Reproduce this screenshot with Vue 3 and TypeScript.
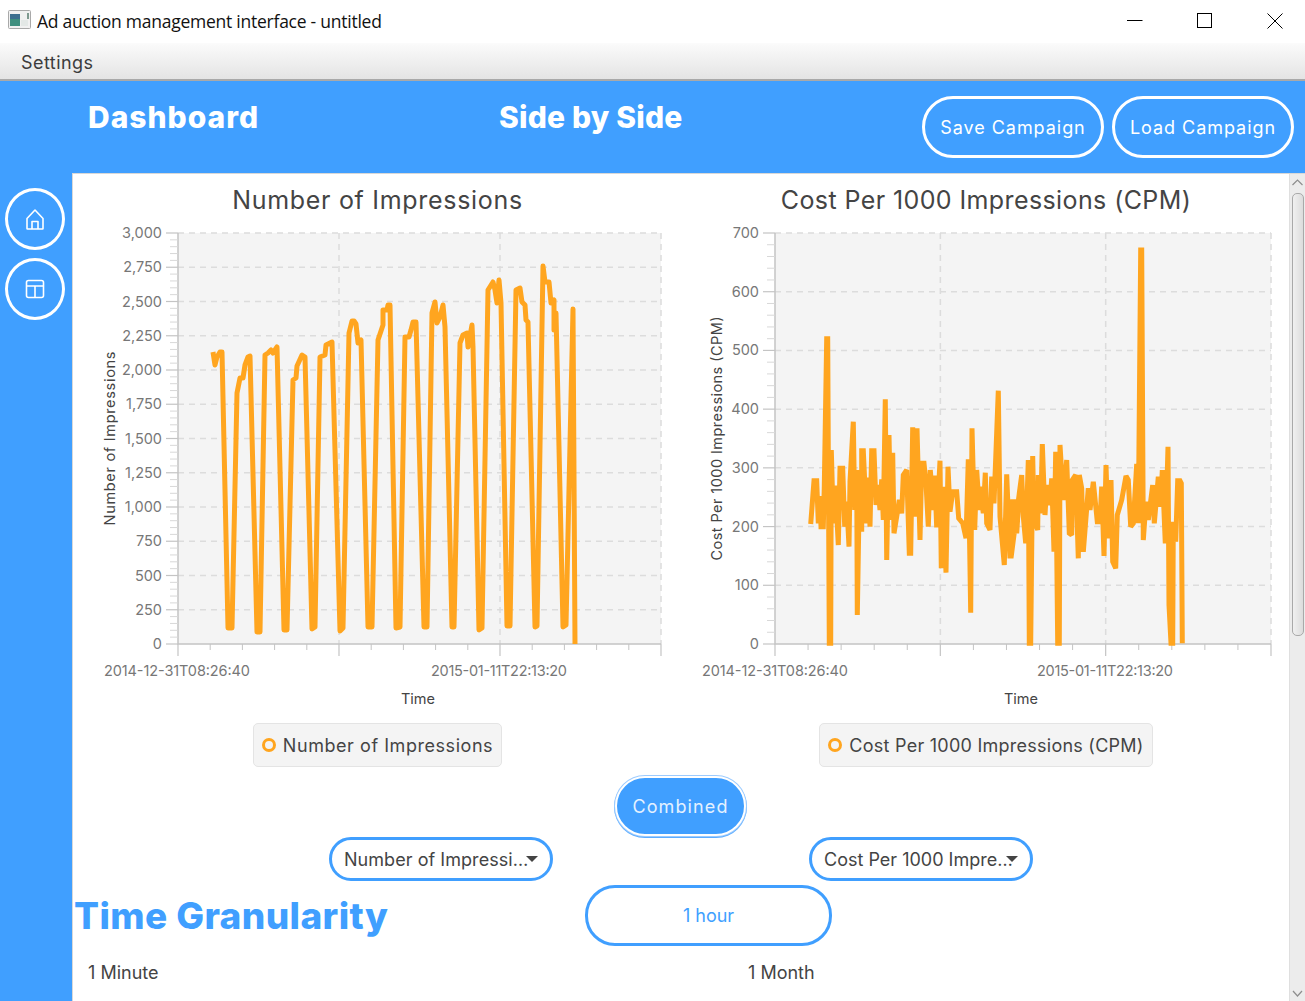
<script setup lang="ts">
type P = [number, number];

const impressionPoints: P[] = [
  [213,352],[215,365],[217,357],[220,352],[222,352],[228,628],[232,628],[237,393],[240,378],[243,378],[245,365],[248,357],[250,356],
  [257,632],[260,632],[265,355],[268,353],[271,350],[273,353],[277,347],[284,630],[287,630],[293,380],[296,378],[297,366],[302,355],[305,357],
  [312,629],[315,627],[320,357],[325,355],[326,345],[332,342],[340,631],[343,628],[349,333],[352,321],[354,321],[356,324],[358,343],[361,340],
  [368,627],[372,627],[378,340],[383,325],[383,310],[387,310],[388,305],[390,305],[396,628],[400,627],[405,337],[409,337],[411,330],[413,322],[416,322],
  [424,627],[427,627],[432,313],[435,302],[437,323],[440,317],[443,305],[445,327],[452,627],[454,627],[460,343],[463,335],[467,333],[468,347],[472,325],[473,347],
  [479,630],[482,628],[488,290],[493,282],[495,290],[497,303],[499,280],[501,303],[507,626],[510,626],[516,290],[520,288],[522,302],[525,305],[526,320],[528,322],
  [535,627],[537,626],[543,266],[545,282],[549,282],[551,303],[554,300],[554,330],[556,313],[563,627],[566,625],[573,309],[575,644]
];

const z5: P[] = [
  [122,612],[132,482],[140,482],[145,610],[150,528],[153,620],[160,620],[163,498],[170,56],[173,56],[178,970],[182,970],[184,390],[190,610],[196,497],[205,675],[210,445],[218,445],[224,620],[230,545],[237,680],[240,485],[250,305],[254,570],[260,450],[262,885],[268,520],[275,635],[275,392],[280,392],[290,610],[290,480],[295,480],[300,620],[305,392],[312,392],[318,555],[323,495],[330,570],[335,478],[340,600],[346,238],[350,720],[357,345],[362,600],[368,398],[372,640],[380,590],[388,540],[395,580],[400,465],[410,450],[418,700],[422,700],[428,322],[435,590],[441,325],[450,660],[455,430],[462,430],[468,490],[475,620],[481,450],[490,570],[494,467],[500,622],[510,422],[514,745],[520,500],[528,758],[534,440],[540,575],[548,515],[560,515],[566,595],[578,610],[588,655],[595,418],[602,878],[606,325],[614,630],[620,450],[628,570],[630,500],[640,580],[646,458],[650,610],[660,630],[665,470],[672,550],[685,212],[690,590],[703,735],[710,463],[720,715],[726,545],[740,640],[748,520]
];
const z6: P[] = [
  [3,955],[8,785],[18,785],[20,880],[28,760],[35,705],[40,830],[47,910],[55,660],[58,1210],[62,1210],[68,648],[72,840],[83,870],[85,705],[92,820],[97,612],[105,825],[110,735],[120,795],[125,715],[132,935],[137,635],[143,1210],[148,1210],[150,615],[160,780],[170,660],[178,880],[185,885],[187,720],[197,705],[205,955],[208,705],[215,745],[220,935],[235,745],[240,810],[250,725],[262,845],[270,845],[275,740],[282,948],[288,675],[295,895],[303,720],[308,965],[317,985],[322,825],[335,780],[348,708],[355,720],[362,860],[370,850],[380,672],[385,850],[392,30],[395,30],[400,900],[408,785],[415,840],[428,735],[433,850],[445,710],[452,800],[457,690],[466,910],[474,620],[477,1095],[483,1210],[488,1210],[490,845],[497,905],[503,722],[510,722],[514,730],[517,1210]
];

const toLine = (pts: P[]) => pts.map(([x, y]) => `${x},${y}`).join(" ");
const impressionLine = toLine(impressionPoints);
const cpmLine = toLine([
  ...z5.map(([x, y]): P => [+(770 + x / 3).toFixed(1), +(320 + y / 3).toFixed(1)]),
  ...z6.map(([x, y]): P => [+(1010 + x / 3).toFixed(1), +(240 + y / 3).toFixed(1)]),
]);

const range = (n: number) => Array.from({ length: n }, (_, i) => i);

interface Chart {
  id: string;
  viewBox: string;
  width: number;
  left: number;
  right: number;
  yLabels: string[];
  yTitle: string;
  yTitleX: number;
  yTitleLength: number;
  line: string;
  stroke: number;
  dates: { x: number; text: string; length: number }[];
  timeX: number;
}

const TOP = 233;
const BOTTOM = 644;

const charts: Chart[] = [
  {
    id: "chart-a",
    viewBox: "73 222 609 490",
    width: 609,
    left: 178,
    right: 661,
    yLabels: ["0","250","500","750","1,000","1,250","1,500","1,750","2,000","2,250","2,500","2,750","3,000"],
    yTitle: "Number of Impressions",
    yTitleX: 115,
    yTitleLength: 174,
    line: impressionLine,
    stroke: 5,
    dates: [
      { x: 177, text: "2014-12-31T08:26:40", length: 146 },
      { x: 499, text: "2015-01-11T22:13:20", length: 136 },
    ],
    timeX: 418,
  },
  {
    id: "chart-b",
    viewBox: "682 222 608 490",
    width: 608,
    left: 775,
    right: 1271,
    yLabels: ["0","100","200","300","400","500","600","700"],
    yTitle: "Cost Per 1000 Impressions (CPM)",
    yTitleX: 722,
    yTitleLength: 244,
    line: cpmLine,
    stroke: 5,
    dates: [
      { x: 775, text: "2014-12-31T08:26:40", length: 146 },
      { x: 1105, text: "2015-01-11T22:13:20", length: 136 },
    ],
    timeX: 1021,
  },
];

const yMajor = (c: Chart) => range(c.yLabels.length).map(i => BOTTOM - (i * (BOTTOM - TOP)) / (c.yLabels.length - 1));
const yMinor = (c: Chart) => {
  const step = (BOTTOM - TOP) / (c.yLabels.length - 1) / 5;
  return range((c.yLabels.length - 1) * 5 + 1).filter(i => i % 5 !== 0).map(i => BOTTOM - i * step);
};
const xMajor = (c: Chart) => range(4).map(i => c.left + (i * (c.right - c.left)) / 3);
const xMinor = (c: Chart) => {
  const step = (c.right - c.left) / 15;
  return range(16).filter(i => i % 5 !== 0).map(i => c.left + i * step);
};
</script>

<template>
  <div class="window">
    <div class="titlebar">
      <svg class="app-icon" width="23" height="19" viewBox="0 0 23 19">
        <rect x="0.5" y="0.5" width="22" height="18" rx="1" fill="#f1f1f1" stroke="#a9a9a9" />
        <rect x="2" y="4" width="10" height="12" fill="#3f8f7f" />
        <rect x="2" y="4" width="10" height="5" fill="#3d6f8f" />
        <rect x="13" y="10" width="7" height="6" fill="#e3e8e6" />
        <rect x="19" y="3" width="2" height="6" fill="#7f9a90" />
      </svg>
      <span class="window-title">Ad auction management interface - untitled</span>
      <div class="win-controls">
        <svg width="16" height="16" viewBox="0 0 16 16"><path d="M0 7.5H15.5" stroke="#000" fill="none" /></svg>
        <svg width="16" height="16" viewBox="0 0 16 16"><rect x="0.5" y="0.5" width="14" height="14" stroke="#000" fill="none" /></svg>
        <svg width="16" height="16" viewBox="0 0 16 16"><path d="M0.5 0.5L15.5 15.5M15.5 0.5L0.5 15.5" stroke="#000" fill="none" /></svg>
      </div>
    </div>

    <div class="menubar"><span>Settings</span></div>

    <header class="topbar">
      <h1 class="head-dash">Dashboard</h1>
      <h1 class="head-side">Side by Side</h1>
      <div class="top-actions">
        <button class="pill">Save Campaign</button>
        <button class="pill">Load Campaign</button>
      </div>
    </header>

    <div class="body">
      <nav class="sidebar">
        <button class="round">
          <svg width="22" height="24" viewBox="0 0 22 24" fill="none" stroke="#fff" stroke-width="1.6" stroke-linejoin="round">
            <path d="M11 3L3 11.5V21.5Q3 22 3.5 22H18.5Q19 22 19 21.5V11.5Z" />
            <path d="M8 22V14.5H14V22" />
          </svg>
        </button>
        <button class="round">
          <svg width="22" height="22" viewBox="0 0 22 22" fill="none" stroke="#fff" stroke-width="1.6" stroke-linejoin="round">
            <rect x="2.5" y="2.5" width="17" height="17" rx="2" />
            <path d="M2.5 8H19.5M11 8V19.5" />
          </svg>
        </button>
      </nav>

      <main class="content">
        <div class="scroll-area">
          <div class="charts">
            <section v-for="c in charts" :key="c.id" class="chart" :class="c.id">
              <h2 class="chart-title">{{ c.yTitle }}</h2>
              <svg class="plot" :viewBox="c.viewBox" :width="c.width" height="490">
                <rect :x="c.left" :y="TOP" :width="c.right - c.left" :height="BOTTOM - TOP" fill="#f4f4f4" />
                <g stroke="#dcdcdc" stroke-width="1.5" stroke-dasharray="6 5" fill="none">
                  <path v-for="y in yMajor(c).slice(1)" :key="y" :d="`M${c.left} ${y}H${c.right}`" />
                  <path v-for="x in xMajor(c).slice(1)" :key="x" :d="`M${x} ${TOP}V${BOTTOM}`" />
                </g>
                <g stroke="#c4c4c4" fill="none">
                  <path :d="`M${c.left} ${TOP}V${BOTTOM}H${c.right}`" stroke-width="1.5" />
                  <path v-for="y in yMajor(c)" :key="y" :d="`M${c.left - 12} ${y}H${c.left}`" stroke-width="1.2" />
                  <path v-for="y in yMinor(c)" :key="y" :d="`M${c.left - 8} ${y}H${c.left}`" stroke-width="1" stroke="#d8d8d8" />
                  <path v-for="x in xMajor(c)" :key="x" :d="`M${x} ${BOTTOM}v12`" stroke-width="1.2" />
                  <path v-for="x in xMinor(c)" :key="x" :d="`M${x} ${BOTTOM}v6`" stroke-width="1" />
                </g>
                <polyline
                  :points="c.line"
                  fill="none"
                  stroke="#ffa51f"
                  :stroke-width="c.stroke"
                  :stroke-linejoin="c.id === 'chart-a' ? 'round' : 'miter'"
                  stroke-miterlimit="2"
                />
                <text
                  v-for="(label, i) in c.yLabels"
                  :key="label"
                  class="tick"
                  :x="c.left - 16"
                  :y="yMajor(c)[i] + 5"
                  text-anchor="end"
                >{{ label }}</text>
                <text
                  v-for="d in c.dates"
                  :key="d.text"
                  class="tick"
                  :x="d.x"
                  y="676"
                  text-anchor="middle"
                  :textLength="d.length"
                >{{ d.text }}</text>
                <text class="axis-title" :x="c.timeX" y="704" text-anchor="middle">Time</text>
                <text
                  class="axis-title"
                  :transform="`translate(${c.yTitleX} 438.5) rotate(-90)`"
                  text-anchor="middle"
                  :textLength="c.yTitleLength"
                >{{ c.yTitle }}</text>
              </svg>
              <div class="legend"><span class="legend-dot"></span>{{ c.yTitle }}</div>
            </section>
          </div>

          <div class="combined-row"><button class="combined">Combined</button></div>

          <div class="selects">
            <div class="select select-a"><span>Number of Impressi…</span><i class="caret"></i></div>
            <div class="select select-b"><span>Cost Per 1000 Impre…</span><i class="caret"></i></div>
          </div>

          <div class="granularity">
            <h2 class="gran-title">Time Granularity</h2>
            <button class="hour">1 hour</button>
          </div>

          <div class="scale">
            <span class="scale-min">1 Minute</span>
            <span class="scale-max">1 Month</span>
          </div>
        </div>

        <div class="scrollbar">
          <svg class="arrow" width="15" height="19" viewBox="0 0 15 19"><path d="M2.5 11L7.5 6L12.5 11" stroke="#8e8e8e" stroke-width="1.2" fill="none" /></svg>
          <div class="thumb"></div>
          <svg class="arrow arrow-down" width="15" height="14" viewBox="0 0 15 14"><path d="M3 4L7.5 9L12 4" stroke="#8e8e8e" stroke-width="1.2" fill="none" /></svg>
        </div>
      </main>
    </div>
  </div>
</template>

<style scoped>
.window {
  width: 1305px;
  height: 1001px;
  overflow: hidden;
  display: flex;
  flex-direction: column;
  background: #fff;
  font-family: Inter, "Noto Sans", sans-serif;
  color: #333;
}
.titlebar {
  height: 43px;
  flex: none;
  display: flex;
  align-items: center;
  padding-left: 8px;
  background: #fff;
}
.app-icon { margin-right: 6px; margin-top: -4px; }
.window-title {
  font-family: "Open Sans", "Noto Sans", sans-serif;
  font-size: 17.5px;
  letter-spacing: -0.25px;
  color: #111;
  margin-top: -2px;
}
.win-controls {
  margin-left: auto;
  margin-right: 22px;
  display: flex;
  gap: 54px;
  margin-top: -2px;
}
.menubar {
  height: 38px;
  flex: none;
  box-sizing: border-box;
  display: flex;
  align-items: center;
  padding: 2px 0 0 21px;
  font-size: 18px;
  letter-spacing: 0.45px;
  color: #3c3c3c;
  background: linear-gradient(#fbfbfb, #e4e4e4);
  border-bottom: 2px solid #a9a9a9;
}
.topbar {
  height: 92px;
  flex: none;
  display: flex;
  padding-left: 88px;
  background: #409fff;
  color: #fff;
}
.topbar h1 {
  margin: 0;
  font-size: 30px;
  line-height: 36px;
  font-weight: 800;
  padding-top: 18px;
}
.head-dash { width: 411px; flex: none; letter-spacing: 1px; }
.head-side { letter-spacing: 0.2px; }
.top-actions {
  margin-left: auto;
  margin-right: 11px;
  padding-top: 15px;
  display: flex;
  gap: 8px;
}
.pill {
  width: 182px;
  height: 62px;
  box-sizing: border-box;
  border: 3px solid #fff;
  border-radius: 31px;
  background: transparent;
  color: #fff;
  font: 400 18px Inter, sans-serif;
  letter-spacing: 0.95px;
  padding: 0;
}
.body { flex: 1; min-height: 0; display: flex; background: #409fff; }
.sidebar {
  width: 72px;
  flex: none;
  display: flex;
  flex-direction: column;
  gap: 8px;
  padding: 15px 0 0 5px;
  box-sizing: border-box;
}
.round {
  width: 60px;
  height: 62px;
  box-sizing: border-box;
  border: 3px solid #fff;
  border-radius: 50%;
  background: transparent;
  padding: 0;
  display: flex;
  align-items: center;
  justify-content: center;
}
.content {
  flex: 1;
  min-width: 0;
  display: flex;
  background: #fff;
  border-top: 1px solid #d8d8d8;
  border-left: 1px solid #d8d8d8;
}
.scroll-area { flex: 1; min-width: 0; overflow: hidden; }
.charts { display: flex; }
.chart { display: flex; flex-direction: column; align-items: center; }
.plot { display: block; }
.chart-title {
  margin: 0;
  padding-top: 10px;
  height: 48px;
  box-sizing: border-box;
  font-size: 25px;
  line-height: 32px;
  font-weight: 400;
  color: #444;
  white-space: nowrap;
}
.chart-a .chart-title { letter-spacing: 0.7px; }
.chart-b .chart-title { letter-spacing: 0.4px; }
.tick { font-size: 14.5px; fill: #777; font-family: Inter, sans-serif; }
.axis-title { font-size: 14.5px; fill: #444; font-family: Inter, sans-serif; }
.legend {
  margin-top: 11px;
  height: 44px;
  box-sizing: border-box;
  display: flex;
  align-items: center;
  padding: 0 8px 0 8px;
  background: #f4f4f4;
  border: 1.5px solid #e4e4e4;
  border-radius: 5px;
  font-size: 18px;
  color: #444;
  white-space: nowrap;
}
.chart-a .legend { letter-spacing: 0.55px; }
.chart-b .legend { letter-spacing: 0.25px; }
.legend-dot {
  width: 14px;
  height: 14px;
  box-sizing: border-box;
  border: 3.5px solid #ffa51f;
  border-radius: 50%;
  margin-right: 7px;
}
.combined-row { padding-top: 9px; margin-left: 542px; height: 61px; }
.combined {
  width: 131px;
  height: 60px;
  box-sizing: border-box;
  padding: 0;
  border: 2px solid #fff;
  border-radius: 30px;
  background: #409fff;
  box-shadow: 0 0 0 1px #9ccbff, 0 1px 0 1px #5dadff;
  color: #e4f1ff;
  font: 400 18px Inter, sans-serif;
  letter-spacing: 1.1px;
}
.selects { display: flex; padding-left: 256px; }
.select {
  height: 44px;
  box-sizing: border-box;
  border: 3px solid #409fff;
  border-radius: 22px;
  display: flex;
  align-items: center;
  padding-left: 12px;
  position: relative;
  font-size: 18px;
  color: #444;
  white-space: nowrap;
}
.select-a { width: 224px; letter-spacing: 0.05px; }
.select-b { width: 224px; margin-left: 256px; }
.caret {
  position: absolute;
  right: 12px;
  top: 16px;
  width: 0;
  height: 0;
  border-left: 6px solid transparent;
  border-right: 6px solid transparent;
  border-top: 6px solid #444;
}
.granularity { display: flex; align-items: center; padding-top: 4px; }
.gran-title {
  margin: 0;
  width: 512px;
  flex: none;
  padding-left: 1px;
  box-sizing: border-box;
  font-size: 37px;
  line-height: 44px;
  font-weight: 800;
  letter-spacing: 0.4px;
  color: #409fff;
  white-space: nowrap;
}
.hour {
  width: 247px;
  height: 61px;
  box-sizing: border-box;
  border: 3px solid #409fff;
  border-radius: 30px;
  background: #fff;
  color: #409fff;
  padding: 0;
  font: 400 18px Inter, sans-serif;
}
.scale {
  display: flex;
  padding-top: 15px;
  font-size: 18px;
  line-height: 24px;
  color: #444;
}
.scale-min { margin-left: 15px; width: 660px; flex: none; }
.scrollbar {
  width: 15px;
  flex: none;
  display: flex;
  flex-direction: column;
  background: #ececec;
  border-left: 1px solid #dfdfdf;
}
.arrow { flex: none; display: block; }
.arrow-down { margin-top: auto; }
.thumb {
  flex: none;
  height: 443px;
  width: 12px;
  margin-left: 2px;
  box-sizing: border-box;
  border: 1.5px solid #a9a9a9;
  border-radius: 5px;
  background: linear-gradient(90deg, #f0f0f0, #dcdcdc);
}
</style>

<style>
body { margin: 0; }
</style>
